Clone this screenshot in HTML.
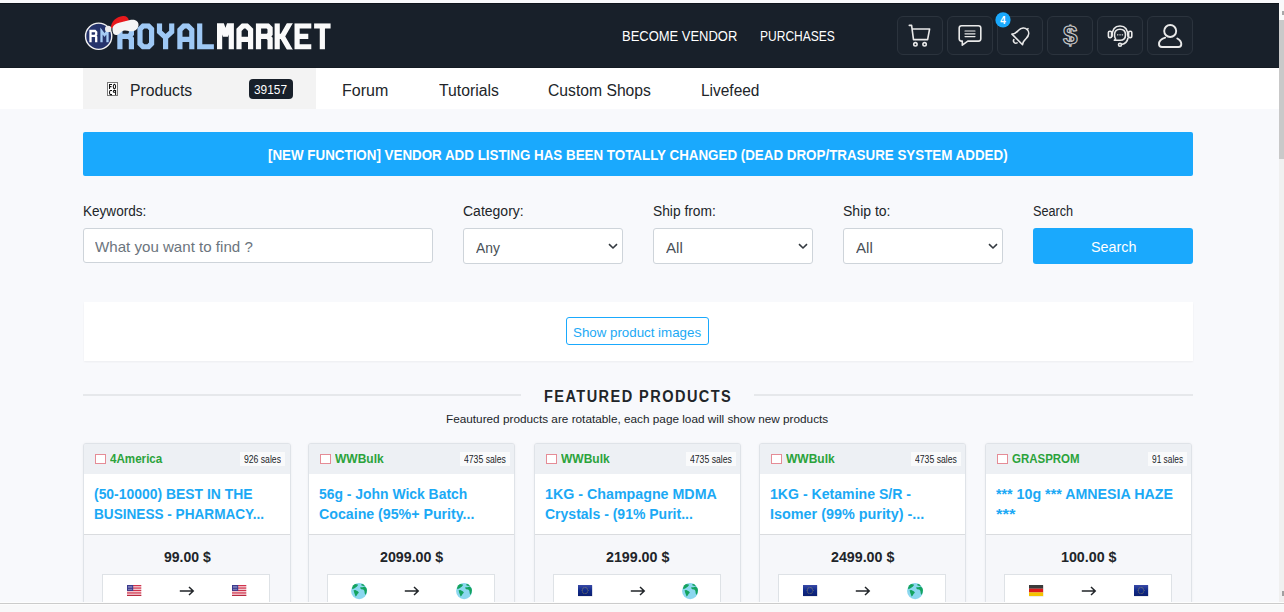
<!DOCTYPE html>
<html><head><meta charset="utf-8">
<style>
*{box-sizing:border-box;margin:0;padding:0}
html,body{width:1284px;height:612px;overflow:hidden}
body{position:relative;background:#f8f9fc;font-family:"Liberation Sans",sans-serif;color:#212529}
.a{position:absolute}
.t{position:absolute;white-space:nowrap;line-height:1;transform-origin:0 0}
#topstrip{left:0;top:0;width:1284px;height:3px;background:#f8f9fb}
#hdr{left:0;top:3px;width:1279px;height:65px;background:#18202a;border-top:1px solid #0e141b;border-bottom:1px solid #141b23}
#nav{left:0;top:68px;width:1279px;height:41px;background:#fff}
#vscroll{left:1279px;top:3px;width:5px;height:599px;background:#f0f0f0}
#thumb{left:1279px;top:20px;width:5px;height:139px;background:#c9c9c9}
#vsbtn{left:1279px;top:3px;width:5px;height:17px;background:#f9f9f9}
#vstop{left:1282px;top:11px;width:2px;height:4px;background:#a8a8a8}
#vsbtm{left:1282px;top:591px;width:2px;height:5px;background:#a0a0a0}
#hscroll{left:0;top:602px;width:1284px;height:10px;background:linear-gradient(#fdfdfd 0,#fdfdfd 1px,#cbcbcb 1px,#cbcbcb 2px,#fcfcfc 2px,#fcfcfc 3px,#f8f8f9 3px)}
.ibox{top:16px;width:46px;height:39px;border:1px solid #2b333d;border-radius:6px;background:#1b232d}
#icbox{left:107px;top:82px;width:11px;height:14px;border:1px solid #777;background:#fff;font-family:"Liberation Mono",monospace;font-size:6px;line-height:6px;color:#111;padding:0 0 0 1px;font-weight:bold}
#icbox span{display:block;letter-spacing:-0.5px}
#badge{left:249px;top:79px;width:44px;height:20px;background:#18202a;border-radius:4px}
#banner{left:83px;top:132px;width:1109.5px;height:43.5px;background:#1aa9fd;border-radius:2px}
.inp{top:228px;height:35px;background:#fff;border:1px solid #ced4da;border-radius:3px}
.sel{top:228px;height:36px;width:160px;background:#fff;border:1px solid #ced4da;border-radius:3px}
.chev{position:absolute;left:144px;top:14px}
#sbtn{left:1033px;top:228px;width:160px;height:36px;background:#1aa9fd;border-radius:3px}
#panel{left:83.5px;top:302px;width:1109.5px;height:59px;background:#fff;box-shadow:0 1px 2px rgba(0,0,0,.05)}
#showbtn{left:566.3px;top:317.3px;width:143.2px;height:28px;border:1px solid #1aa9fd;border-radius:3px;background:#fff}
.hline{top:394px;height:2px;background:#e6e8eb}
.card{top:443px;height:180px;background:#f6f7fa;border:1px solid #dfe3e8;border-radius:3px;box-shadow:0 0 3px rgba(0,0,0,.05);overflow:hidden}
.ch{position:absolute;left:0;top:0;width:100%;height:30px;background:#edf0f4}
.ct{position:absolute;left:0;top:30px;width:100%;height:61px;background:#fff;border-bottom:1px solid #dadcdf}
.fbox{position:absolute;left:18px;top:130px;width:168px;height:60px;background:#fff;border:1px solid #dee2e6}
.vbox{top:454px;width:11px;height:9.5px;border:1px solid #e58c96;background:#fff}
.sales{top:452px;height:14px;background:#f9fafb}

</style></head><body class="full">
<div id="topstrip" class="a"></div>
<div id="hdr" class="a"></div>
<div id="nav" class="a"></div>
<div id="vscroll" class="a"></div>
<div id="thumb" class="a"></div>
<div id="vsbtm" class="a"></div>
<div id="vsbtn" class="a"></div>
<div id="vstop" class="a"></div>
<svg class="a" style="left:0;top:0" width="360" height="68" viewBox="0 0 360 68">
<clipPath id="lc"><rect x="0" y="23.3" width="360" height="26.2"/></clipPath><g clip-path="url(#lc)" fill="none" stroke-width="5.2" stroke-linejoin="miter" stroke-miterlimit="3" stroke-linecap="square">
<g stroke="#9ec8f5"><path d="M119.90,46.90 V25.90 H129.00 L131.40,28.30 V34.00 L129.00,36.40 H119.90 M129.00,36.40 L131.40,38.80 V46.90"/><path d="M140.00,29.10 L143.20,25.90 H148.40 L151.60,29.10 V43.70 L148.40,46.90 H143.20 L140.00,43.70 Z"/><path d="M159.50,25.90 V31.90 L165.60,37.40 L171.70,31.90 V25.90 M165.60,37.40 V46.90"/><path d="M179.90,46.90 V29.90 L183.90,25.90 H187.80 L191.80,29.90 V46.90 M179.90,39.30 H191.80"/><path d="M199.70,25.90 V46.90 H211.30"/></g>
<g stroke="#fafafa"><path d="M219.60,20.30 V46.90 M231.30,20.30 V46.90 M220.80,22.30 L225.45,35.90 L230.10,22.30"/><path d="M239.00,46.90 V29.90 L243.00,25.90 H246.60 L250.60,29.90 V46.90 M239.00,39.30 H250.60"/><path d="M258.50,46.90 V25.90 H267.70 L270.10,28.30 V34.00 L267.70,36.40 H258.50 M267.70,36.40 L270.10,38.80 V46.90"/><path d="M277.20,25.90 V46.90 M290.90,21.30 L282.20,36.40 L290.90,51.50 M277.20,36.40 H282.20"/><path d="M308.70,25.90 H297.10 V46.90 H308.70 M297.10,36.40 H305.70"/><path d="M316.70,25.90 H328.00 M322.35,25.90 V46.90"/></g>
</g>
<circle cx="98.65" cy="36.25" r="13.1" fill="#25336b" stroke="#f2f2f2" stroke-width="1.4"/>
<g fill="none" stroke-width="2.3" stroke-linejoin="miter" stroke-linecap="square">
<path stroke="#ffffff" d="M90.5,41 V31 H95 L96.2,32.2 V34.5 L95,35.8 H90.5 M95,35.8 L96.2,37 V41"/>
<path stroke="#a6ccf5" d="M101.5,41 V31 L104.5,35 L107.5,31 V41"/>
</g>
<path d="M110.7,28.5 C111.2,21 116,17.2 123,16.1 C126,15.7 128.6,17.8 128.9,20.8 L118,26 Z" fill="#e8191c"/>
<path d="M112.5,30 C112.2,25.5 115.5,23.6 120,22.5 L131,19.8 C136,19 139,22 138.5,25.5 C138.2,28.5 136,30.8 133,31.2 C130,31.6 128,30.2 124.5,30.4 C121,30.7 119.5,35.2 115.8,35.1 C113.6,35 112.6,32.5 112.5,30 Z" fill="#f5f5f5"/>
<circle cx="108.2" cy="28.9" r="3.2" fill="#ececec"/>
</svg>
<div class="a ibox" style="left:897px"></div><div class="a ibox" style="left:947px"></div><div class="a ibox" style="left:997px"></div><div class="a ibox" style="left:1047px"></div><div class="a ibox" style="left:1097px"></div><div class="a ibox" style="left:1147px"></div>
<svg class="a" style="left:880px;top:0" width="330" height="68" viewBox="880 0 330 68">
<g fill="none" stroke="#e9e9e9" stroke-width="1.6" stroke-linecap="round" stroke-linejoin="round">
<!-- cart -->
<path d="M909.3,25.4 H911.6 L913.5,39.6 H927.6 L929.6,29 H912.4"/>
<circle cx="915.4" cy="44.3" r="1.7"/><circle cx="924.6" cy="44.3" r="1.7"/>
<!-- chat -->
<path d="M961.5,25.8 H978.5 Q980.8,25.8 980.8,28.1 V38.8 Q980.8,41.1 978.5,41.1 H967.8 L962.3,45.2 V41.1 H961.5 Q959.2,41.1 959.2,38.8 V28.1 Q959.2,25.8 961.5,25.8 Z"/>
<path d="M965,31 H975 M965,33.8 H975 M965,36.6 H975" stroke-width="1.2"/>
<!-- bell rotated -->
<g transform="translate(1021.5 35.2) rotate(45)">
<path d="M-7.5,6 C-5.5,4.2 -5.6,2 -5.6,-1 C-5.6,-5.6 -3,-8 0,-8 C3,-8 5.6,-5.6 5.6,-1 C5.6,2 5.5,4.2 7.5,6 Z"/>
<path d="M-2.3,8.6 A2.4,2.4 0 0 0 2.3,8.6"/>
<path d="M0,-8 V-9.2"/>
</g>
<!-- dollar -->
<text x="1070.3" y="44.3" font-family="Liberation Sans" font-weight="bold" font-size="26" text-anchor="middle" fill="none" stroke="#c9c9c9" stroke-width="1.1">$</text>
<!-- headset -->
<path d="M1112,36.5 Q1112,26 1120,26 Q1128,26 1128,36.5"/>
<rect x="1108.4" y="31.2" width="3.2" height="6.4" rx="1.4"/>
<rect x="1128.6" y="31.2" width="3.2" height="6.4" rx="1.4"/>
<path d="M1128,38 Q1127,43.5 1121.5,44.5"/>
<circle cx="1120" cy="44.8" r="1.5"/>
<path d="M1114.3,40.3 L1115.6,39 Q1114.5,37.5 1114.5,35 Q1114.5,29.2 1120,29.2 Q1125.5,29.2 1125.5,34.8 Q1125.5,40.3 1120,40.3 Z"/>
<path d="M1117.6,34.8 H1117.9 M1119.9,34.8 H1120.2 M1122.2,34.8 H1122.5" stroke-width="1.3"/>
<!-- user -->
<circle cx="1170.2" cy="31" r="6" stroke-width="1.9"/>
<path d="M1165.2,37.6 Q1159,39.5 1159,44 Q1159,47 1162,47 H1178.5 Q1181.3,47 1181.3,44 Q1181.3,40.8 1177.3,38.5" stroke-width="1.9"/>
</g>
<circle cx="1003" cy="19.9" r="7.6" fill="#1aa9fd"/>
<text x="1003.1" y="23.6" text-anchor="middle" font-family="Liberation Sans" font-weight="bold" font-size="10" fill="#fff">4</text>
</svg>
<div class="a" style="left:83px;top:68px;width:233px;height:41px;background:#f3f3f3"></div>
<svg class="a" style="left:106px;top:81px" width="14" height="17" viewBox="106 81 14 17"><rect x="107.5" y="82.5" width="10" height="13" fill="#fff" stroke="#7a7a7a" stroke-width="1"/><g fill="none" stroke="#111" stroke-width="1.05"><path d="M112,84.5 H109.5 V89 M109.5,86.6 H111.5"/><path d="M114.4,84.2 Q113.3,84.6 113.3,86.5 Q113.3,88.6 114.4,88.9 Q115.6,88.6 115.6,86.5 Q115.6,84.6 114.4,84.2 Z"/><path d="M112,90.5 H110.3 Q109.5,90.8 109.5,92.5 Q109.5,94.3 110.3,94.6 H112"/><path d="M115.6,92.3 H113.8 Q113.3,92 113.3,91.2 Q113.4,90.5 114.1,90.5 H115.6 V95"/></g></svg>
<div class="a" id="badge"></div>
<div id="banner" class="a"></div>
<div class="a inp" style="left:83px;width:350px"></div>
<div class="a sel" style="left:463px"><svg class="chev" width="10" height="7" viewBox="0 0 10 7"><path d="M1,1.2 L5,5 L9,1.2" fill="none" stroke="#343a40" stroke-width="1.6"/></svg></div>
<div class="a sel" style="left:653px"><svg class="chev" width="10" height="7" viewBox="0 0 10 7"><path d="M1,1.2 L5,5 L9,1.2" fill="none" stroke="#343a40" stroke-width="1.6"/></svg></div>
<div class="a sel" style="left:843px"><svg class="chev" width="10" height="7" viewBox="0 0 10 7"><path d="M1,1.2 L5,5 L9,1.2" fill="none" stroke="#343a40" stroke-width="1.6"/></svg></div>
<div id="sbtn" class="a"></div>
<div id="panel" class="a"></div>
<div id="showbtn" class="a"></div>
<div class="a hline" style="left:83px;width:438px"></div>
<div class="a hline" style="left:754px;width:439px"></div>
<div class="a card" style="left:83px;width:208px"><div class="ch"></div><div class="ct"></div><div class="fbox"></div></div>
<div class="a vbox" style="left:94.5px"></div>
<div class="a sales" style="left:239.8px;width:45.5px"></div>
<svg class="a" style="left:126.9px;top:584.8px" width="15" height="12" viewBox="0 0 15 12"><rect width="14.3" height="11" fill="#fff"/><rect x="0" y="0.00" width="14.3" height="0.85" fill="#c8102e"/><rect x="0" y="1.69" width="14.3" height="0.85" fill="#c8102e"/><rect x="0" y="3.38" width="14.3" height="0.85" fill="#c8102e"/><rect x="0" y="5.08" width="14.3" height="0.85" fill="#c8102e"/><rect x="0" y="6.77" width="14.3" height="0.85" fill="#c8102e"/><rect x="0" y="8.46" width="14.3" height="0.85" fill="#c8102e"/><rect x="0" y="10.15" width="14.3" height="0.85" fill="#c8102e"/><rect width="6.2" height="5.9" fill="#3c3b8e"/><g fill="#b9bde0" opacity=".8"><rect x="1" y="1" width="4.2" height="0.6"/><rect x="1" y="2.5" width="4.2" height="0.6"/><rect x="1" y="4" width="4.2" height="0.6"/></g><rect y="10.3" width="14.3" height="0.7" fill="#8a1e2a" opacity=".5"/></svg>
<svg class="a" style="left:231.8px;top:584.8px" width="15" height="12" viewBox="0 0 15 12"><rect width="14.3" height="11" fill="#fff"/><rect x="0" y="0.00" width="14.3" height="0.85" fill="#c8102e"/><rect x="0" y="1.69" width="14.3" height="0.85" fill="#c8102e"/><rect x="0" y="3.38" width="14.3" height="0.85" fill="#c8102e"/><rect x="0" y="5.08" width="14.3" height="0.85" fill="#c8102e"/><rect x="0" y="6.77" width="14.3" height="0.85" fill="#c8102e"/><rect x="0" y="8.46" width="14.3" height="0.85" fill="#c8102e"/><rect x="0" y="10.15" width="14.3" height="0.85" fill="#c8102e"/><rect width="6.2" height="5.9" fill="#3c3b8e"/><g fill="#b9bde0" opacity=".8"><rect x="1" y="1" width="4.2" height="0.6"/><rect x="1" y="2.5" width="4.2" height="0.6"/><rect x="1" y="4" width="4.2" height="0.6"/></g><rect y="10.3" width="14.3" height="0.7" fill="#8a1e2a" opacity=".5"/></svg>
<svg class="a" style="left:179.3px;top:585px" width="16" height="12" viewBox="0 0 16 12"><path d="M0.8,6 H14.2 M10,2 L14.2,6 L10,10" fill="none" stroke="#212529" stroke-width="1.5"/></svg>
<div class="a card" style="left:308px;width:207px"><div class="ch"></div><div class="ct"></div><div class="fbox"></div></div>
<div class="a vbox" style="left:319.5px"></div>
<div class="a sales" style="left:460.0px;width:50.1px"></div>
<svg class="a" style="left:351.0px;top:582.9px" width="17" height="17" viewBox="0 0 17 17"><g transform="translate(0.05 0.05)"><circle cx="8.05" cy="8.05" r="8.05" fill="#8bd7ef"/><g fill="#14a35f"><path d="M6.67,1.37 L3.92,0.98 L1.96,2.55 L0.98,4.9 L1.37,6.08 L3.53,5.3 L5.88,3.33 L7.06,1.96 Z"/><path d="M2.55,7.25 L4.31,6.86 L7.06,8.43 L7.84,9.61 L6.67,10.8 L5.49,12.7 L4.51,13.5 L3.92,11.6 L3.14,9.61 Z"/><path d="M9.8,1.37 L11.8,0.98 L13.7,2.55 L12.5,2.94 L10.6,2.55 Z"/><path d="M9.22,4.12 L11.4,4.12 L13.7,3.53 L15.3,4.9 L15.9,6.86 L15.5,9.61 L14.5,12 L13.7,10.4 L13.3,7.65 L12.2,6.47 L10.2,6.08 L9.22,5.3 Z"/></g></g></svg>
<svg class="a" style="left:455.9px;top:582.9px" width="17" height="17" viewBox="0 0 17 17"><g transform="translate(0.05 0.05)"><circle cx="8.05" cy="8.05" r="8.05" fill="#8bd7ef"/><g fill="#14a35f"><path d="M6.67,1.37 L3.92,0.98 L1.96,2.55 L0.98,4.9 L1.37,6.08 L3.53,5.3 L5.88,3.33 L7.06,1.96 Z"/><path d="M2.55,7.25 L4.31,6.86 L7.06,8.43 L7.84,9.61 L6.67,10.8 L5.49,12.7 L4.51,13.5 L3.92,11.6 L3.14,9.61 Z"/><path d="M9.8,1.37 L11.8,0.98 L13.7,2.55 L12.5,2.94 L10.6,2.55 Z"/><path d="M9.22,4.12 L11.4,4.12 L13.7,3.53 L15.3,4.9 L15.9,6.86 L15.5,9.61 L14.5,12 L13.7,10.4 L13.3,7.65 L12.2,6.47 L10.2,6.08 L9.22,5.3 Z"/></g></g></svg>
<svg class="a" style="left:404.3px;top:585px" width="16" height="12" viewBox="0 0 16 12"><path d="M0.8,6 H14.2 M10,2 L14.2,6 L10,10" fill="none" stroke="#212529" stroke-width="1.5"/></svg>
<div class="a card" style="left:534px;width:207px"><div class="ch"></div><div class="ct"></div><div class="fbox"></div></div>
<div class="a vbox" style="left:545.5px"></div>
<div class="a sales" style="left:686.0px;width:50.3px"></div>
<svg class="a" style="left:577.9px;top:584.8px" width="15" height="12" viewBox="0 0 15 12"><defs><linearGradient id="eug577.9" x1="0" y1="0" x2="0" y2="1"><stop offset="0" stop-color="#3a4aa8"/><stop offset=".5" stop-color="#102a8a"/><stop offset="1" stop-color="#0c1f70"/></linearGradient></defs><rect x="0.3" y="0.6" width="14.1" height="11" fill="#000" opacity=".12"/><rect width="14.1" height="11" fill="url(#eug577.9)"/><circle cx="10.05" cy="5.50" r="0.42" fill="#c9b34a"/><circle cx="9.65" cy="7.00" r="0.42" fill="#c9b34a"/><circle cx="8.55" cy="8.10" r="0.42" fill="#c9b34a"/><circle cx="7.05" cy="8.50" r="0.42" fill="#c9b34a"/><circle cx="5.55" cy="8.10" r="0.42" fill="#c9b34a"/><circle cx="4.45" cy="7.00" r="0.42" fill="#c9b34a"/><circle cx="4.05" cy="5.50" r="0.42" fill="#c9b34a"/><circle cx="4.45" cy="4.00" r="0.42" fill="#c9b34a"/><circle cx="5.55" cy="2.90" r="0.42" fill="#c9b34a"/><circle cx="7.05" cy="2.50" r="0.42" fill="#c9b34a"/><circle cx="8.55" cy="2.90" r="0.42" fill="#c9b34a"/><circle cx="9.65" cy="4.00" r="0.42" fill="#c9b34a"/></svg>
<svg class="a" style="left:681.9px;top:582.9px" width="17" height="17" viewBox="0 0 17 17"><g transform="translate(0.05 0.05)"><circle cx="8.05" cy="8.05" r="8.05" fill="#8bd7ef"/><g fill="#14a35f"><path d="M6.67,1.37 L3.92,0.98 L1.96,2.55 L0.98,4.9 L1.37,6.08 L3.53,5.3 L5.88,3.33 L7.06,1.96 Z"/><path d="M2.55,7.25 L4.31,6.86 L7.06,8.43 L7.84,9.61 L6.67,10.8 L5.49,12.7 L4.51,13.5 L3.92,11.6 L3.14,9.61 Z"/><path d="M9.8,1.37 L11.8,0.98 L13.7,2.55 L12.5,2.94 L10.6,2.55 Z"/><path d="M9.22,4.12 L11.4,4.12 L13.7,3.53 L15.3,4.9 L15.9,6.86 L15.5,9.61 L14.5,12 L13.7,10.4 L13.3,7.65 L12.2,6.47 L10.2,6.08 L9.22,5.3 Z"/></g></g></svg>
<svg class="a" style="left:630.3px;top:585px" width="16" height="12" viewBox="0 0 16 12"><path d="M0.8,6 H14.2 M10,2 L14.2,6 L10,10" fill="none" stroke="#212529" stroke-width="1.5"/></svg>
<div class="a card" style="left:759px;width:207px"><div class="ch"></div><div class="ct"></div><div class="fbox"></div></div>
<div class="a vbox" style="left:770.5px"></div>
<div class="a sales" style="left:910.9px;width:50.4px"></div>
<svg class="a" style="left:802.9px;top:584.8px" width="15" height="12" viewBox="0 0 15 12"><defs><linearGradient id="eug802.9" x1="0" y1="0" x2="0" y2="1"><stop offset="0" stop-color="#3a4aa8"/><stop offset=".5" stop-color="#102a8a"/><stop offset="1" stop-color="#0c1f70"/></linearGradient></defs><rect x="0.3" y="0.6" width="14.1" height="11" fill="#000" opacity=".12"/><rect width="14.1" height="11" fill="url(#eug802.9)"/><circle cx="10.05" cy="5.50" r="0.42" fill="#c9b34a"/><circle cx="9.65" cy="7.00" r="0.42" fill="#c9b34a"/><circle cx="8.55" cy="8.10" r="0.42" fill="#c9b34a"/><circle cx="7.05" cy="8.50" r="0.42" fill="#c9b34a"/><circle cx="5.55" cy="8.10" r="0.42" fill="#c9b34a"/><circle cx="4.45" cy="7.00" r="0.42" fill="#c9b34a"/><circle cx="4.05" cy="5.50" r="0.42" fill="#c9b34a"/><circle cx="4.45" cy="4.00" r="0.42" fill="#c9b34a"/><circle cx="5.55" cy="2.90" r="0.42" fill="#c9b34a"/><circle cx="7.05" cy="2.50" r="0.42" fill="#c9b34a"/><circle cx="8.55" cy="2.90" r="0.42" fill="#c9b34a"/><circle cx="9.65" cy="4.00" r="0.42" fill="#c9b34a"/></svg>
<svg class="a" style="left:906.9px;top:582.9px" width="17" height="17" viewBox="0 0 17 17"><g transform="translate(0.05 0.05)"><circle cx="8.05" cy="8.05" r="8.05" fill="#8bd7ef"/><g fill="#14a35f"><path d="M6.67,1.37 L3.92,0.98 L1.96,2.55 L0.98,4.9 L1.37,6.08 L3.53,5.3 L5.88,3.33 L7.06,1.96 Z"/><path d="M2.55,7.25 L4.31,6.86 L7.06,8.43 L7.84,9.61 L6.67,10.8 L5.49,12.7 L4.51,13.5 L3.92,11.6 L3.14,9.61 Z"/><path d="M9.8,1.37 L11.8,0.98 L13.7,2.55 L12.5,2.94 L10.6,2.55 Z"/><path d="M9.22,4.12 L11.4,4.12 L13.7,3.53 L15.3,4.9 L15.9,6.86 L15.5,9.61 L14.5,12 L13.7,10.4 L13.3,7.65 L12.2,6.47 L10.2,6.08 L9.22,5.3 Z"/></g></g></svg>
<svg class="a" style="left:855.3px;top:585px" width="16" height="12" viewBox="0 0 16 12"><path d="M0.8,6 H14.2 M10,2 L14.2,6 L10,10" fill="none" stroke="#212529" stroke-width="1.5"/></svg>
<div class="a card" style="left:985px;width:207px"><div class="ch"></div><div class="ct"></div><div class="fbox"></div></div>
<div class="a vbox" style="left:996.5px"></div>
<div class="a sales" style="left:1147.8px;width:39.6px"></div>
<svg class="a" style="left:1028.9px;top:584.8px" width="15" height="12" viewBox="0 0 15 12"><rect x="0.3" y="0.6" width="14.1" height="11" fill="#000" opacity=".12"/><rect width="14.1" height="3.7" fill="#3a3a3a"/><rect y="3.7" width="14.1" height="3.7" fill="#dd1b1b"/><rect y="7.4" width="14.1" height="3.6" fill="#f5c400"/></svg>
<svg class="a" style="left:1133.8px;top:584.8px" width="15" height="12" viewBox="0 0 15 12"><defs><linearGradient id="eug1133.8" x1="0" y1="0" x2="0" y2="1"><stop offset="0" stop-color="#3a4aa8"/><stop offset=".5" stop-color="#102a8a"/><stop offset="1" stop-color="#0c1f70"/></linearGradient></defs><rect x="0.3" y="0.6" width="14.1" height="11" fill="#000" opacity=".12"/><rect width="14.1" height="11" fill="url(#eug1133.8)"/><circle cx="10.05" cy="5.50" r="0.42" fill="#c9b34a"/><circle cx="9.65" cy="7.00" r="0.42" fill="#c9b34a"/><circle cx="8.55" cy="8.10" r="0.42" fill="#c9b34a"/><circle cx="7.05" cy="8.50" r="0.42" fill="#c9b34a"/><circle cx="5.55" cy="8.10" r="0.42" fill="#c9b34a"/><circle cx="4.45" cy="7.00" r="0.42" fill="#c9b34a"/><circle cx="4.05" cy="5.50" r="0.42" fill="#c9b34a"/><circle cx="4.45" cy="4.00" r="0.42" fill="#c9b34a"/><circle cx="5.55" cy="2.90" r="0.42" fill="#c9b34a"/><circle cx="7.05" cy="2.50" r="0.42" fill="#c9b34a"/><circle cx="8.55" cy="2.90" r="0.42" fill="#c9b34a"/><circle cx="9.65" cy="4.00" r="0.42" fill="#c9b34a"/></svg>
<svg class="a" style="left:1081.3px;top:585px" width="16" height="12" viewBox="0 0 16 12"><path d="M0.8,6 H14.2 M10,2 L14.2,6 L10,10" fill="none" stroke="#212529" stroke-width="1.5"/></svg>
<div class="t" id="hv" style="left:621.62px;top:29px;font-size:14px;font-weight:400;color:#ffffff;transform:scaleX(0.9263);">BECOME VENDOR</div>
<div class="t" id="hp" style="left:759.68px;top:29px;font-size:14px;font-weight:400;color:#ffffff;transform:scaleX(0.8596);">PURCHASES</div>
<div class="t" id="n1" style="left:129.91px;top:83px;font-size:16px;font-weight:400;color:#212529;transform:scaleX(0.9843);">Products</div>
<div class="t" id="bd" style="left:254.27px;top:83px;font-size:13px;font-weight:400;color:#ffffff;transform:scaleX(0.9143);">39157</div>
<div class="t" id="n2" style="left:341.89px;top:83px;font-size:16px;font-weight:400;color:#212529;transform:scaleX(1.0004);">Forum</div>
<div class="t" id="n3" style="left:439.31px;top:83px;font-size:16px;font-weight:400;color:#212529;transform:scaleX(0.9833);">Tutorials</div>
<div class="t" id="n4" style="left:547.60px;top:83px;font-size:16px;font-weight:400;color:#212529;transform:scaleX(0.9808);">Custom Shops</div>
<div class="t" id="n5" style="left:700.55px;top:83px;font-size:16px;font-weight:400;color:#212529;transform:scaleX(0.9657);">Livefeed</div>
<div class="t" id="bn" style="left:268.05px;top:148px;font-size:14px;font-weight:700;color:#ffffff;transform:scaleX(0.9547);">[NEW FUNCTION] VENDOR ADD LISTING HAS BEEN TOTALLY CHANGED (DEAD DROP/TRASURE SYSTEM ADDED)</div>
<div class="t" id="l1" style="left:82.55px;top:204px;font-size:14px;font-weight:400;color:#212529;transform:scaleX(0.9685);">Keywords:</div>
<div class="t" id="l2" style="left:462.70px;top:204px;font-size:14px;font-weight:400;color:#212529;transform:scaleX(1.0003);">Category:</div>
<div class="t" id="l3" style="left:652.70px;top:204px;font-size:14px;font-weight:400;color:#212529;transform:scaleX(0.9840);">Ship from:</div>
<div class="t" id="l4" style="left:842.69px;top:204px;font-size:14px;font-weight:400;color:#212529;transform:scaleX(1.0005);">Ship to:</div>
<div class="t" id="l5" style="left:1032.80px;top:204px;font-size:14px;font-weight:400;color:#212529;transform:scaleX(0.9054);">Search</div>
<div class="t" id="ph" style="left:95.40px;top:239px;font-size:15px;font-weight:400;color:#6c757d;transform:scaleX(1.0065);">What you want to find ?</div>
<div class="t" id="s1" style="left:475.80px;top:240px;font-size:15px;font-weight:400;color:#495057;transform:scaleX(0.9238);">Any</div>
<div class="t" id="s2" style="left:665.76px;top:240px;font-size:15px;font-weight:400;color:#495057;transform:scaleX(1.0044);">All</div>
<div class="t" id="s3" style="left:855.76px;top:240px;font-size:15px;font-weight:400;color:#495057;transform:scaleX(1.0044);">All</div>
<div class="t" id="sb" style="left:1090.65px;top:239px;font-size:15px;font-weight:400;color:#ffffff;transform:scaleX(0.9562);">Search</div>
<div class="t" id="sh" style="left:573.49px;top:326px;font-size:13px;font-weight:400;color:#1ba9f5;transform:scaleX(1.0243);">Show product images</div>
<div class="t" id="ft" style="left:543.60px;top:389px;font-size:16px;font-weight:700;color:#212529;transform:scaleX(0.9078);letter-spacing:1.6px;">FEATURED PRODUCTS</div>
<div class="t" id="fs" style="left:446.46px;top:414px;font-size:11px;font-weight:400;color:#212529;transform:scaleX(1.0702);">Feautured products are rotatable, each page load will show new products</div>
<div class="t" id="c0v" style="left:110.00px;top:453px;font-size:12.5px;font-weight:700;color:#2ba33b;transform:scaleX(0.9287);">4America</div>
<div class="t" id="c0s" style="left:243.84px;top:454px;font-size:10.5px;font-weight:400;color:#212529;transform:scaleX(0.8222);">926 sales</div>
<div class="t" id="c0a" style="left:93.60px;top:487px;font-size:14px;font-weight:700;color:#1ba9f5;transform:scaleX(0.9938);">(50-10000) BEST IN THE</div>
<div class="t" id="c0b" style="left:93.61px;top:507px;font-size:14px;font-weight:700;color:#1ba9f5;transform:scaleX(0.9713);">BUSINESS - PHARMACY...</div>
<div class="t" id="c0p" style="left:163.69px;top:550px;font-size:14px;font-weight:700;color:#212529;transform:scaleX(1.0007);">99.00 $</div>
<div class="t" id="c1v" style="left:335.10px;top:453px;font-size:12.5px;font-weight:700;color:#2ba33b;transform:scaleX(0.9613);">WWBulk</div>
<div class="t" id="c1s" style="left:464.00px;top:454px;font-size:10.5px;font-weight:400;color:#212529;transform:scaleX(0.8241);">4735 sales</div>
<div class="t" id="c1a" style="left:319.11px;top:487px;font-size:14px;font-weight:700;color:#1ba9f5;transform:scaleX(0.9933);">56g - John Wick Batch</div>
<div class="t" id="c1b" style="left:319.09px;top:507px;font-size:14px;font-weight:700;color:#1ba9f5;transform:scaleX(1.0132);">Cocaine (95%+ Purity...</div>
<div class="t" id="c1p" style="left:380.29px;top:550px;font-size:14px;font-weight:700;color:#212529;transform:scaleX(1.0161);">2099.00 $</div>
<div class="t" id="c2v" style="left:561.00px;top:453px;font-size:12.5px;font-weight:700;color:#2ba33b;transform:scaleX(0.9608);">WWBulk</div>
<div class="t" id="c2s" style="left:690.00px;top:454px;font-size:10.5px;font-weight:400;color:#212529;transform:scaleX(0.8239);">4735 sales</div>
<div class="t" id="c2a" style="left:544.88px;top:487px;font-size:14px;font-weight:700;color:#1ba9f5;transform:scaleX(1.0180);">1KG - Champagne MDMA</div>
<div class="t" id="c2b" style="left:544.90px;top:507px;font-size:14px;font-weight:700;color:#1ba9f5;transform:scaleX(1.0001);">Crystals - (91% Purit...</div>
<div class="t" id="c2p" style="left:606.40px;top:550px;font-size:14px;font-weight:700;color:#212529;transform:scaleX(1.0162);">2199.00 $</div>
<div class="t" id="c3v" style="left:786.00px;top:453px;font-size:12.5px;font-weight:700;color:#2ba33b;transform:scaleX(0.9608);">WWBulk</div>
<div class="t" id="c3s" style="left:914.91px;top:454px;font-size:10.5px;font-weight:400;color:#212529;transform:scaleX(0.8237);">4735 sales</div>
<div class="t" id="c3a" style="left:769.89px;top:487px;font-size:14px;font-weight:700;color:#1ba9f5;transform:scaleX(1.0072);">1KG - Ketamine S/R -</div>
<div class="t" id="c3b" style="left:769.87px;top:507px;font-size:14px;font-weight:700;color:#1ba9f5;transform:scaleX(1.0271);">Isomer (99% purity) -...</div>
<div class="t" id="c3p" style="left:831.40px;top:550px;font-size:14px;font-weight:700;color:#212529;transform:scaleX(1.0162);">2499.00 $</div>
<div class="t" id="c4v" style="left:1012.00px;top:453px;font-size:12.5px;font-weight:700;color:#2ba33b;transform:scaleX(0.9181);">GRASPROM</div>
<div class="t" id="c4s" style="left:1151.85px;top:454px;font-size:10.5px;font-weight:400;color:#212529;transform:scaleX(0.7952);">91 sales</div>
<div class="t" id="c4a" style="left:996.38px;top:487px;font-size:14px;font-weight:700;color:#1ba9f5;transform:scaleX(1.0174);">*** 10g *** AMNESIA HAZE</div>
<div class="t" id="c4b" style="left:996.28px;top:507px;font-size:14px;font-weight:700;color:#1ba9f5;transform:scaleX(1.1889);">***</div>
<div class="t" id="c4p" style="left:1060.79px;top:550px;font-size:14px;font-weight:700;color:#212529;transform:scaleX(1.0194);">100.00 $</div>
<div id="hscroll" class="a"></div>
</body></html>
